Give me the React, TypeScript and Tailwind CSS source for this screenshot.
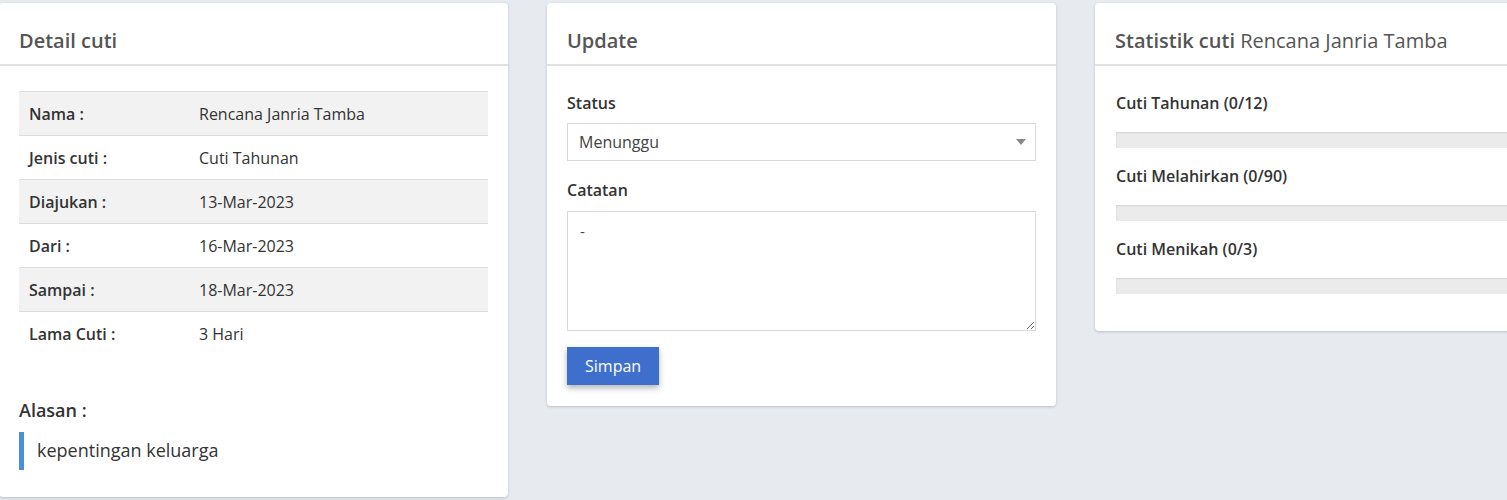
const detailRows = [
  { label: 'Nama :', value: 'Rencana Janria Tamba' },
  { label: 'Jenis cuti :', value: 'Cuti Tahunan' },
  { label: 'Diajukan :', value: '13-Mar-2023' },
  { label: 'Dari :', value: '16-Mar-2023' },
  { label: 'Sampai :', value: '18-Mar-2023' },
  { label: 'Lama Cuti :', value: '3 Hari' },
]

const stats = [
  { name: 'Cuti Tahunan', used: 0, total: 12 },
  { name: 'Cuti Melahirkan', used: 0, total: 90 },
  { name: 'Cuti Menikah', used: 0, total: 3 },
]

const cardCls =
  'shrink-0 w-[509px] bg-white rounded-[4px] shadow-[0_1px_3px_rgba(0,0,0,0.18)]'

const CardHeader = ({ children }: { children: React.ReactNode }) => (
  <div className="px-[20px] pt-[26px] pb-[11px] border-b-2 border-[#e1e1e1]">
    <h3 className="text-[20px] leading-[24px] font-semibold text-[#555]">
      {children}
    </h3>
  </div>
)

const App = () => {
  return (
    <div
      className="w-[1507px] h-[500px] overflow-hidden bg-[#e7eaee] text-[#333]"
      style={{ fontFamily: '"Open Sans", "Noto Sans", sans-serif' }}
    >
      <div className="flex items-start gap-[39px] ml-[-1px] pt-[3px]">
        {/* detail cuti */}
        <div className={cardCls + ' h-[494px]'}>
          <CardHeader>Detail cuti</CardHeader>
          <div className="px-[20px] pt-[25px]">
            <table className="w-full border-collapse text-[16px]">
              <tbody>
                {detailRows.map((row, idx) => (
                  <tr
                    key={idx}
                    className={
                      'h-[44px] border-t border-[#dcdcdc] ' +
                      (idx % 2 === 0 ? 'bg-[#f2f2f2]' : 'bg-white')
                    }
                  >
                    <td className="w-[180px] pl-[10px] font-semibold">
                      {row.label}
                    </td>
                    <td>{row.value}</td>
                  </tr>
                ))}
              </tbody>
            </table>
            <div className="mt-[42px] text-[18px] leading-[24px] font-semibold">
              Alasan :
            </div>
            <blockquote className="mt-[10px] h-[38px] flex items-center border-l-[5px] border-[#4a90d9] pl-[13px] text-[18px]">
              kepentingan keluarga
            </blockquote>
          </div>
        </div>

        {/* update */}
        <div className={cardCls}>
          <CardHeader>Update</CardHeader>
          <div className="px-[20px] pt-[25px] pb-[21px]">
            <label className="block text-[16px] leading-[24px] font-semibold">
              Status
            </label>
            <div className="relative mt-[8px]">
              <select
                defaultValue="Menunggu"
                className="w-full h-[38px] appearance-none border border-[#d9d9d9] bg-white pl-[11px] text-[16px] text-[#444] outline-none"
              >
                <option>Menunggu</option>
                <option>Disetujui</option>
                <option>Ditolak</option>
              </select>
              <span className="absolute right-[10px] top-[16px] w-0 h-0 border-l-[5px] border-r-[5px] border-t-[6px] border-l-transparent border-r-transparent border-t-[#888]" />
            </div>
            <label className="block mt-[17px] text-[16px] leading-[24px] font-semibold">
              Catatan
            </label>
            <textarea
              defaultValue="-"
              className="block mt-[9px] w-full h-[120px] border border-[#d9d9d9] px-[12px] py-[8px] text-[15px] text-[#444] outline-none"
            />
            <button className="mt-[16px] h-[38px] px-[18px] bg-[#3f6fcc] text-white text-[16px] shadow-[0_3px_6px_rgba(0,0,0,0.3)]">
              Simpan
            </button>
          </div>
        </div>

        {/* statistik */}
        <div className={cardCls}>
          <CardHeader>
            Statistik cuti{' '}
            <span className="font-normal">Rencana Janria Tamba</span>
          </CardHeader>
          <div className="px-[21px] pt-[25px] pb-[37px] flex flex-col gap-[16px]">
            {stats.map((s, idx) => (
              <div key={idx}>
                <div className="text-[16px] leading-[24px] font-semibold">
                  {s.name} ({s.used}/{s.total})
                </div>
                <div className="mt-[17px] h-[16px] bg-[#ebebeb] shadow-[inset_0_1px_2px_rgba(0,0,0,0.1)]">
                  <div
                    className="h-full bg-[#3f6fcc]"
                    style={{ width: `${(s.used / s.total) * 100}%` }}
                  />
                </div>
              </div>
            ))}
          </div>
        </div>
      </div>
    </div>
  )
}

export default App
